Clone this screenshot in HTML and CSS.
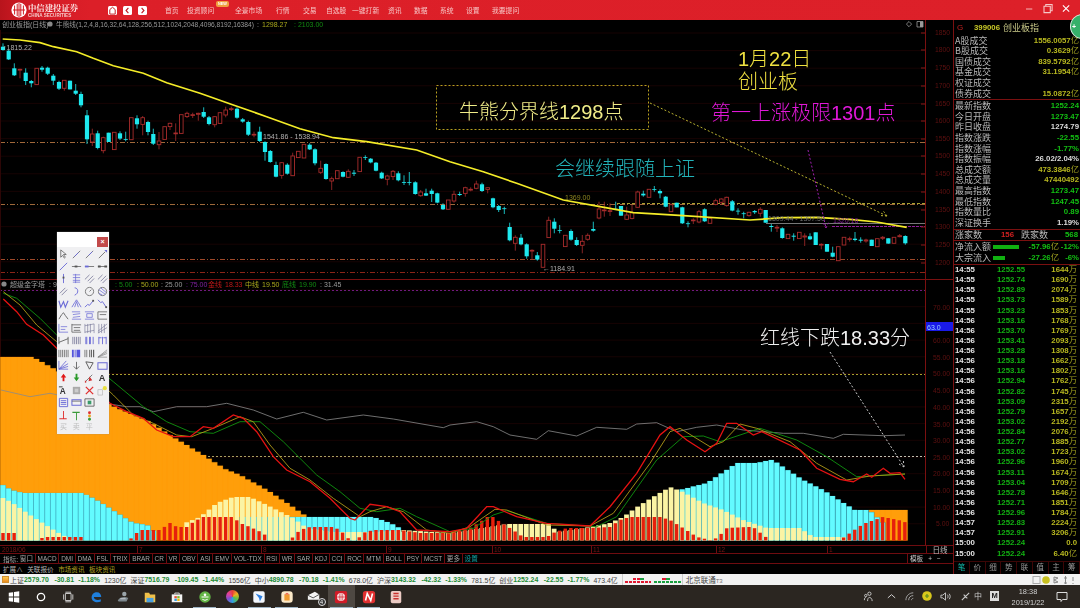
FILE: index.html
```html
<!DOCTYPE html>
<html lang="zh-CN">
<head>
<meta charset="utf-8">
<title>中信建投证券</title>
<link rel="stylesheet" href="styles.css">
</head>
<body>
<div class="app">
  <header class="topbar">
    <div class="brand">
      <svg class="brand-mark" viewBox="0 0 16 16"><circle cx="8" cy="8" r="7.6" fill="#fff"/><path d="M3.6 3.5v9M6.2 1.8v12.4M8 1v14M9.8 1.8v12.4M12.4 3.5v9M2 8h12" stroke="#d01c24" stroke-width="1" fill="none"/></svg>
      <div class="brand-text"><strong>中信建投证券</strong><small>CHINA SECURITIES</small></div>
    </div>
    <div class="navbtns">
      <span class="navbtn"><svg viewBox="0 0 10 10"><path d="M2 9V4l3-2.6L8 4v5z" fill="none" stroke="#c02028" stroke-width="1.1"/></svg></span>
      <span class="navbtn"><svg viewBox="0 0 10 10"><path d="M6 2L3.4 5 6 8" fill="none" stroke="#c02028" stroke-width="1.3"/></svg></span>
      <span class="navbtn"><svg viewBox="0 0 10 10"><path d="M4 2l2.6 3L4 8" fill="none" stroke="#c02028" stroke-width="1.3"/></svg></span>
    </div>
    <nav class="menu">
      <span class="m1">首页</span>
      <span class="m2">投资顾问<em class="newtag">NEW</em></span>
      <span class="m3">全景市场</span>
      <span class="m4">行情</span>
      <span class="m5">交易</span>
      <span class="m6">自选股</span>
      <span class="m7">一键打新</span>
      <span class="m8">资讯</span>
      <span class="m9">数据</span>
      <span class="m9">系统</span>
      <span class="m9">设置</span>
      <span class="m10">我要提问</span>
    </nav>
    <div class="winctl">
      <svg viewBox="0 0 60 20"><path d="M0 10h7" stroke="#f6c8c8" stroke-width="1"/><path d="M20 7h7v7h-7zM22 7V5h7v7h-2" fill="none" stroke="#f6c8c8" stroke-width="1.2"/><path d="M41 6l7 7M48 6l-7 7" stroke="#fff" stroke-width="1.2"/></svg>
    </div>
  </header>

  <div class="body">
    <section class="charts">
      <svg id="chart" class="chart" viewBox="0 20 953 525" width="953" height="525">
        <g id="grid"></g>
        <g id="candles"></g>
        <g id="bars"></g>
        <g id="lines"></g>

        <g class="hdr">
          <text x="2" y="27" class="t-gray">创业板指(日线)</text>
          <circle cx="50" cy="24" r="2.6" fill="#888"/>
          <text x="56" y="27" class="t-gray t-long">牛熊线(1,2,4,8,16,32,64,128,256,512,1024,2048,4096,8192,16384)</text>
          <text x="257" y="27" class="t-gray">:</text>
          <text x="262" y="27" class="t-yellow">1298.27</text>
          <text x="294" y="27" class="t-green">: 2103.00</text>
          <path d="M909 21.5l2.6 2.6-2.6 2.6-2.6-2.6z" fill="none" stroke="#999" stroke-width=".8"/>
          <path d="M917 21.5h6v5.5h-6z" fill="none" stroke="#999" stroke-width=".8"/><path d="M920 21.5h3v5.5h-3z" fill="#999"/>

          <circle cx="4" cy="284" r="2.6" fill="#888"/>
          <text x="10" y="287" class="t-gray">超级金字塔</text>
          <text x="49" y="287" class="t-gray">: 9.00</text>
          <text x="115" y="287" class="t-green">: 5.00</text>
          <text x="137" y="287" class="t-yellow">: 50.00</text>
          <text x="161" y="287" class="t-gray">: 25.00</text>
          <text x="186" y="287" class="t-purple">: 75.00</text>
          <text x="208" y="287" class="t-red">金线</text>
          <text x="225" y="287" class="t-red">18.33</text>
          <text x="245" y="287" class="t-yellow">中线</text>
          <text x="262" y="287" class="t-yellow">19.50</text>
          <text x="282" y="287" class="t-green">底线</text>
          <text x="299" y="287" class="t-green">19.90</text>
          <text x="320" y="287" class="t-gray">: 31.45</text>
        </g>

        <g class="marks">
          <text x="3" y="50" class="t-lt">↑1815.22</text>
          <text x="263" y="139" class="t-lt">1541.86 - 1538.94</text>
          <text x="543" y="271" class="t-lt">←1184.91</text>
          <text x="565" y="200" class="t-ochre">1369.00</text>
          <text x="768" y="221" class="t-dim">1309.44 - 1307.50</text>
          <text x="833" y="223" class="t-violet">1320.16</text>
        </g>

        <g id="axis" class="axis">
          <text x="935" y="35">1850</text><text x="935" y="52">1800</text><text x="935" y="70">1750</text>
          <text x="935" y="88">1700</text><text x="935" y="106">1650</text><text x="935" y="123">1600</text>
          <text x="935" y="141">1550</text><text x="935" y="158">1500</text><text x="935" y="176">1450</text>
          <text x="935" y="194">1400</text><text x="935" y="212">1350</text><text x="935" y="229">1300</text>
          <text x="935" y="247">1250</text><text x="935" y="265">1200</text>
          <text x="933" y="310">70.00</text>
          <text x="933" y="343">60.00</text><text x="933" y="360">55.00</text><text x="933" y="376">50.00</text>
          <text x="933" y="393">45.00</text><text x="933" y="410">40.00</text><text x="933" y="427">35.00</text>
          <text x="933" y="443">30.00</text><text x="933" y="460">25.00</text><text x="933" y="476">20.00</text>
          <text x="933" y="493">15.00</text><text x="933" y="510">10.00</text><text x="936" y="526">5.00</text>
        </g>
        <rect x="926" y="322" width="27" height="9" fill="#1a1ae8"/>
        <text x="927" y="329.5" class="t-tag">63.0</text>

        <g class="notes">
          <rect x="436.5" y="85.5" width="212" height="44" class="notebox"/>
          <text x="459" y="119" class="n n-cream">牛熊分界线1298点</text>
          <text x="738" y="66" class="n n-yellow">1月22日</text>
          <text x="738" y="89" class="n n-yellow">创业板</text>
          <text x="711" y="120" class="n n-magenta">第一上涨极限1301点</text>
          <text x="555" y="176" class="n n-teal">会继续跟随上证</text>
          <text x="760" y="345" class="n n-white">红线下跌18.33分</text>
          <path d="M650 103L887 216M887 216l-6-.4M887 216l-3.4-4.6" class="arrow a-yellow"/>
          <path d="M808 150L826 228M826 228l-3-5M826 228l2.4-5.2" class="arrow a-purple"/>
          <path d="M830 352L904 467M904 467l-5-3M904 467l-.6-6" class="arrow a-white"/>
        </g>
      </svg>

      <div class="daterow">
        <span class="d d0">2018/06</span><span class="d d1">7</span><span class="d d2">8</span><span class="d d3">9</span><span class="d d4">10</span><span class="d d5">11</span><span class="d d6">12</span><span class="d d7">1</span>
        <span class="dateside">日线</span>
      </div>
      <div class="tabrow">
        <span class="tlabel">指标:</span><span class="tab cn">窗口</span><span class="tab">MACD</span><span class="tab">DMI</span><span class="tab">DMA</span><span class="tab">FSL</span><span class="tab">TRIX</span><span class="tab">BRAR</span><span class="tab">CR</span><span class="tab">VR</span><span class="tab">OBV</span><span class="tab">ASI</span><span class="tab">EMV</span><span class="tab">VOL-TDX</span><span class="tab">RSI</span><span class="tab">WR</span><span class="tab">SAR</span><span class="tab">KDJ</span><span class="tab">CCI</span><span class="tab">ROC</span><span class="tab">MTM</span><span class="tab">BOLL</span><span class="tab">PSY</span><span class="tab">MCST</span><span class="tab cn">更多</span><span class="tab cn teal">设置</span>
        <span class="tabside"><span class="cn">模板</span><span>+</span><span>−</span></span>
      </div>
      <div class="extrow">
        <span>扩展∧</span><span>关联报价</span><span class="ochre">市场资讯</span><span class="ochre">板块资讯</span>
      </div>

      <aside class="toolbox">
        <div class="toolhead"><span class="toolx">×</span></div>
        <div id="tools" class="toolgrid"></div>
        <div class="toolfoot"><span>买</span><span>卖</span><span>平</span></div>
      </aside>
    </section>

    <section class="panel">
      <div class="phead"><span class="g">G</span><b>399006</b><span class="pname">创业板指</span></div>
      <div class="sect">
        <div class="row"><span>A股成交</span><b class="y">1556.0057<i>亿</i></b></div>
        <div class="row"><span>B股成交</span><b class="y">0.3629<i>亿</i></b></div>
        <div class="row"><span>国债成交</span><b class="y">839.5792<i>亿</i></b></div>
        <div class="row"><span>基金成交</span><b class="y">31.1954<i>亿</i></b></div>
        <div class="row"><span>权证成交</span><b></b></div>
        <div class="row"><span>债券成交</span><b class="y">15.0872<i>亿</i></b></div>
      </div>
      <div class="sect s2">
        <div class="row"><span>最新指数</span><b class="gr">1252.24</b></div>
        <div class="row"><span>今日开盘</span><b class="gr">1273.47</b></div>
        <div class="row"><span>昨日收盘</span><b class="w">1274.79</b></div>
        <div class="row"><span>指数涨跌</span><b class="gr">-22.55</b></div>
        <div class="row"><span>指数涨幅</span><b class="gr">-1.77%</b></div>
        <div class="row"><span>指数振幅</span><b class="w">26.02/2.04%</b></div>
        <div class="row"><span>总成交额</span><b class="y">473.3846<i>亿</i></b></div>
        <div class="row"><span>总成交量</span><b class="y">47440492</b></div>
        <div class="row"><span>最高指数</span><b class="gr">1273.47</b></div>
        <div class="row"><span>最低指数</span><b class="gr">1247.45</b></div>
        <div class="row"><span>指数量比</span><b class="gr">0.89</b></div>
        <div class="row"><span>深证换手</span><b class="w">1.19%</b></div>
      </div>
      <div class="updown"><span>涨家数</span><b class="rd">156</b><span>跌家数</span><b class="gr">568</b></div>
      <div class="sect s3">
        <div class="flow"><span>净流入额</span><em class="fbar f1"></em><b class="gr">-57.96<i>亿</i></b><b class="gr">-12%</b></div>
        <div class="flow"><span>大宗流入</span><em class="fbar f2"></em><b class="gr">-27.26<i>亿</i></b><b class="gr">-6%</b></div>
      </div>
      <div class="ticks">
        <div class="tk"><b>14:55</b><b>1252.55</b><b>1644<i>万</i></b></div>
        <div class="tk"><b>14:55</b><b>1252.74</b><b>1690<i>万</i></b></div>
        <div class="tk"><b>14:55</b><b>1252.89</b><b>2074<i>万</i></b></div>
        <div class="tk"><b>14:55</b><b>1253.73</b><b>1589<i>万</i></b></div>
        <div class="tk"><b>14:55</b><b>1253.23</b><b>1853<i>万</i></b></div>
        <div class="tk"><b>14:56</b><b>1253.16</b><b>1768<i>万</i></b></div>
        <div class="tk"><b>14:56</b><b>1253.70</b><b>1769<i>万</i></b></div>
        <div class="tk"><b>14:56</b><b>1253.41</b><b>2093<i>万</i></b></div>
        <div class="tk"><b>14:56</b><b>1253.28</b><b>1308<i>万</i></b></div>
        <div class="tk"><b>14:56</b><b>1253.18</b><b>1662<i>万</i></b></div>
        <div class="tk"><b>14:56</b><b>1253.16</b><b>1802<i>万</i></b></div>
        <div class="tk"><b>14:56</b><b>1252.94</b><b>1762<i>万</i></b></div>
        <div class="tk"><b>14:56</b><b>1252.82</b><b>1745<i>万</i></b></div>
        <div class="tk"><b>14:56</b><b>1253.09</b><b>2315<i>万</i></b></div>
        <div class="tk"><b>14:56</b><b>1252.79</b><b>1657<i>万</i></b></div>
        <div class="tk"><b>14:56</b><b>1253.02</b><b>2192<i>万</i></b></div>
        <div class="tk"><b>14:56</b><b>1252.84</b><b>2076<i>万</i></b></div>
        <div class="tk"><b>14:56</b><b>1252.77</b><b>1885<i>万</i></b></div>
        <div class="tk"><b>14:56</b><b>1253.02</b><b>1723<i>万</i></b></div>
        <div class="tk"><b>14:56</b><b>1252.96</b><b>1960<i>万</i></b></div>
        <div class="tk"><b>14:56</b><b>1253.11</b><b>1674<i>万</i></b></div>
        <div class="tk"><b>14:56</b><b>1253.04</b><b>1709<i>万</i></b></div>
        <div class="tk"><b>14:56</b><b>1252.78</b><b>1646<i>万</i></b></div>
        <div class="tk"><b>14:56</b><b>1252.71</b><b>1851<i>万</i></b></div>
        <div class="tk"><b>14:56</b><b>1252.96</b><b>1784<i>万</i></b></div>
        <div class="tk"><b>14:57</b><b>1252.83</b><b>2224<i>万</i></b></div>
        <div class="tk"><b>14:57</b><b>1252.91</b><b>3206<i>万</i></b></div>
        <div class="tk"><b>15:00</b><b>1252.24</b><b>0.0</b></div>
        <div class="tk"><b>15:00</b><b>1252.24</b><b>6.40<i>亿</i></b></div>
      </div>
      <div class="ptabs"><span class="on">笔</span><span>价</span><span>细</span><span>势</span><span>联</span><span>值</span><span>主</span><span>筹</span></div>
    </section>
  </div>

  <footer class="status">
    <span class="sticon"></span>
    <span class="si"><span>上证</span><b>2579.70</b><b>-30.81</b><b>-1.18%</b><u>1230亿</u></span>
    <span class="si"><span>深证</span><b>7516.79</b><b>-109.45</b><b>-1.44%</b><u>1556亿</u></span>
    <span class="si"><span>中小</span><b>4890.78</b><b>-70.18</b><b>-1.41%</b><u>678.0亿</u></span>
    <span class="si"><span>沪深</span><b>3143.32</b><b>-42.32</b><b>-1.33%</b><u>781.5亿</u></span>
    <span class="si"><span>创业</span><b>1252.24</b><b>-22.55</b><b>-1.77%</b><u>473.4亿</u></span>
    <span class="blocks">
      <svg viewBox="0 0 56 9" width="56" height="9"><path d="M0 6h3v2H0zM4 6h3v2H4zM8 6h3v2H8zM12 6h3v2h-3zM16 6h3v2h-3zM20 6h3v2h-3zM8 3h3v2H8zM12 3h3v2h-3zM24 6h2v2h-2z" fill="#e01830"/><path d="M15 3h4v2h-4z" fill="#19a040"/>
      <path d="M29 6h3v2h-3zM33 6h3v2h-3zM37 6h3v2h-3zM41 6h3v2h-3zM45 6h3v2h-3zM49 6h3v2h-3zM53 6h3v2h-3z" fill="#19a040"/><path d="M37 3h4v2h-4z" fill="#e01830"/><path d="M41 3h4v2h-4z" fill="#19a040"/></svg>
    </span>
    <span class="net">北京联通<small>T3</small></span>
    <span class="tray-mini">
      <svg viewBox="0 0 44 10" width="44" height="10"><rect x="1" y="1.500" width="7" height="7" fill="none" stroke="#aaa"/><circle cx="14" cy="5" r="3.800" fill="#c8c020"/><path d="M22 2l4 1-4 2 4 2-4 1zM32 3h3M33.500 1v8M32 8h3M41 2v4M41 8v1" stroke="#888" fill="none"/></svg>
    </span>
  </footer>

  <div class="taskbar">
    <div class="slots">
      <span class="slot"><svg viewBox="0 0 16 16"><path d="M2 3.200l5-.7v5H2zM8 2.400l6-.9V7.500H8zM2 8.500h5v5l-5-.7zM8 8.500h6v6l-6-.9z" fill="#fff"/></svg></span>
      <span class="slot"><svg viewBox="0 0 16 16"><circle cx="8" cy="8" r="4.200" fill="none" stroke="#fff" stroke-width="1.500"/></svg></span>
      <span class="slot"><svg viewBox="0 0 16 16"><path d="M5 4h6.500v8H5zM3 5v6M13.500 5v6M5 2.500h6.500M5 13.500h6.500" fill="none" stroke="#ddd" stroke-width="1"/></svg></span>
      <span class="slot"><svg viewBox="0 0 16 16"><path d="M3 8.500C3 4.500 6 2.500 9 2.500c3.200 0 5 2.400 5 5.500H5.500c.2 3 4.500 4.500 8 2.500v2.500c-4 2-10.500.8-10.500-4.500z" fill="#1f7fdc"/></svg></span>
      <span class="slot"><svg viewBox="0 0 16 16"><circle cx="9.500" cy="4.500" r="2.500" fill="#9aa3a8"/><path d="M2 12c2-4 8-5 12-3l-2 4H3z" fill="#7d878d"/><path d="M5 10h6" stroke="#d0d4d8"/></svg></span>
      <span class="slot"><svg viewBox="0 0 16 16"><path d="M2 3h5l1 2h6v9H2z" fill="#f0c04a"/><path d="M4 9h8v5H4z" fill="#4aa0e0"/></svg></span>
      <span class="slot"><svg viewBox="0 0 16 16"><path d="M2 5h12v9H2z" fill="#f4f4f4"/><path d="M5.500 5V3.500h5V5" fill="none" stroke="#eee"/><path d="M5 7h2.800v2.500H5z" fill="#e8503a"/><path d="M8.300 7H11v2.500H8.300z" fill="#7cbb2c"/><path d="M5 10h2.800v2.500H5z" fill="#2a9ce0"/><path d="M8.300 10H11v2.500H8.300z" fill="#f4b400"/></svg></span>
      <span class="slot line"><svg viewBox="0 0 16 16"><circle cx="8" cy="8" r="6.500" fill="#62b545"/><path d="M4 8h8M5 10.500c2 1.500 4 1.500 6 0" stroke="#fff" fill="none" stroke-width="1.200"/><circle cx="8" cy="5.500" r="1.500" fill="#fff"/></svg></span>
      <span class="slot"><i class="conic"></i></span>
      <span class="slot line"><svg viewBox="0 0 16 16"><rect x="1.500" y="1.500" width="13" height="13" rx="2" fill="#f2f6fc"/><path d="M4 4l8 3-3 6-1-4z" fill="#2d7fe0"/></svg></span>
      <span class="slot line"><svg viewBox="0 0 16 16"><rect x="1.500" y="1.500" width="13" height="13" rx="3.500" fill="#fbe9c8"/><path d="M5 5h6v7H5z" fill="#f09a30"/><path d="M5 5l3-2 3 2" fill="#e85a4a"/></svg></span>
      <span class="slot badged"><svg viewBox="0 0 16 16"><path d="M1 6l8-4 5 3v6H1z" fill="#f4f4f4"/><path d="M1 6l6 3 7-4" fill="none" stroke="#444"/></svg><em class="badge">4</em></span>
      <span class="slot active"><svg viewBox="0 0 16 16"><rect x="1" y="1" width="14" height="14" rx="2" fill="#d01c28"/><circle cx="8" cy="8" r="4.500" fill="#fff"/><path d="M6 4v8M8 3.500v9M10 4v8M3.500 8h9" stroke="#d01c28" stroke-width=".8"/></svg></span>
      <span class="slot line"><svg viewBox="0 0 16 16"><rect x="1" y="1" width="14" height="14" rx="3" fill="#e03030"/><path d="M4 12L6 4l4 8 2-8" fill="none" stroke="#fff" stroke-width="1.800"/></svg></span>
      <span class="slot"><svg viewBox="0 0 16 16"><rect x="2" y="1" width="12" height="14" rx="2" fill="#eccbc4"/><path d="M5 4h6M5 7h6M5 10h6" stroke="#c9302c" stroke-width="1.500"/></svg></span>
    </div>
    <div class="tray">
      <svg class="ti t1" viewBox="0 0 12 12"><circle cx="7" cy="3" r="1.800" fill="none" stroke="#ccc"/><circle cx="3" cy="5" r="1.300" fill="none" stroke="#ccc"/><path d="M5 11c0-3 1-4 2-4s3 1 3 4M1.500 10c0-2 .6-3 1.500-3" fill="none" stroke="#ccc"/></svg>
      <svg class="ti t2" viewBox="0 0 12 12"><path d="M2 7.500l4-3.500 4 3.500" fill="none" stroke="#ddd"/></svg>
      <svg class="ti t3" viewBox="0 0 12 12"><path d="M1 10c0-5 4-8 8-8M4 10c0-3 2-5 5-5M7 10c0-1 1-2 2-2" fill="none" stroke="#aaa"/></svg>
      <svg class="ti t4" viewBox="0 0 12 12"><circle cx="6" cy="6" r="4.800" fill="#d8c81c"/><path d="M4 6h4M6 4v4" stroke="#5a8a20" stroke-width="1.200"/></svg>
      <svg class="ti t5" viewBox="0 0 12 12"><path d="M1 4.500h2L6 2v8L3 7.500H1z" fill="none" stroke="#ccc"/><path d="M8 4c1 1 1 3 0 4M10 3c1.500 2 1.500 4 0 6" fill="none" stroke="#ccc"/></svg>
      <svg class="ti t6" viewBox="0 0 12 12"><path d="M2 10l3-3M5 7l2-2M7 5l3-3M4 4l4 4" fill="none" stroke="#ccc" stroke-width="1.200"/></svg>
      <span class="ime">中</span>
      <span class="msk">M</span>
      <span class="clock"><span>18:38</span><span>2019/1/22</span></span>
      <svg class="ti t7" viewBox="0 0 12 12"><path d="M1 1.500h10v7H6.500L5 10.500V8.500H1z" fill="none" stroke="#ddd"/></svg>
    </div>
  </div>

  <span class="floatball">+</span>
</div>
<script src="chart.js"></script>
</body>
</html>
```

FILE: styles.css
```css
* { box-sizing: border-box; }
html, body { margin: 0; padding: 0; width: 1080px; height: 608px; overflow: hidden; background: #000; }
body { font-family: "Liberation Sans", "Noto Sans CJK SC", sans-serif; }
i, em, u { font-style: normal; text-decoration: none; }
.app { position: relative; width: 1080px; height: 608px; display: flex; flex-direction: column; overflow: hidden; filter: blur(.3px); }

/* top bar */
.topbar { height: 20px; flex: none; display: flex; align-items: center; background: linear-gradient(90deg, #b8141c 0, #d01a24 25px, #dc1f28 90px, #dd2029 100%); color: #fff; position: relative; }
.brand { display: flex; align-items: center; width: 108px; padding-left: 11px; gap: 1px; }
.brand-mark { width: 16px; height: 16px; flex: none; }
.brand-text { display: flex; flex-direction: column; line-height: 1; }
.brand-text strong { font: bold 8.4px "Noto Serif CJK SC", "Noto Sans CJK SC", serif; color: #fbe6e6; letter-spacing: 0; white-space: nowrap; }
.brand-text small { font-size: 4.600px; font-weight: bold; color: #f4c8c8; margin-top: 1.500px; white-space: nowrap; }
.navbtns { display: flex; gap: 6px; width: 57px; }
.navbtn { width: 9px; height: 9px; background: #fff; border-radius: 1.500px; display: block; }
.navbtn svg { display: block; width: 9px; height: 9px; }
.menu { display: flex; font: 6.800px "Noto Sans CJK SC", sans-serif; color: #f6c4c4; white-space: nowrap; }
.menu span { display: block; position: relative; }
.m1 { width: 22px; }
.m2 { width: 48px; }
.m3 { width: 41px; }
.m4 { width: 27px; }
.m5 { width: 23px; }
.m6 { width: 26px; }
.m7 { width: 36px; }
.m8 { width: 26px; }
.m9 { width: 26px; }
.m10 { width: 30px; }
.newtag { position: absolute; left: 29px; top: -4px; background: #f0a040; color: #fff; font: bold 3.800px "Liberation Sans", sans-serif; padding: 0 2px; line-height: 6px; border-radius: 2px; }
.winctl { position: absolute; left: 1026px; top: 0; width: 54px; height: 20px; }
.winctl svg { display: block; width: 54px; height: 18px; }
.floatball { position: absolute; left: 1070px; top: 14px; width: 24px; height: 25px; border-radius: 50%; background: #35b06a; border: 1px solid #d8efe0; color: #fff; font: bold 7px "Liberation Sans", sans-serif; line-height: 23px; padding-left: 1px; }

/* layout */
.body { flex: none; height: 554px; display: flex; }
.charts { width: 953px; flex: none; position: relative; display: flex; flex-direction: column; }
.chart { display: block; flex: none; background: #000; }
.daterow { height: 9px; flex: none; position: relative; border-top: 1px solid #6e0c10; border-bottom: 1px solid #6e0c10; }
.d { position: absolute; top: 0; font-size: 6.500px; line-height: 7px; color: #7a1414; border-left: 1px solid #6e0c10; padding-left: 1px; height: 7px; }
.d0 { left: 1px; border-left: 0; }
.d1 { left: 137px; }
.d2 { left: 261px; }
.d3 { left: 386px; }
.d4 { left: 492px; }
.d5 { left: 591px; }
.d6 { left: 716px; }
.d7 { left: 827px; }
.dateside { position: absolute; left: 926px; width: 27px; top: 0; height: 7px; font: 7.500px/7px "Noto Sans CJK SC", sans-serif; color: #bbb; text-align: center; border-left: 1px solid #6e0c10; }
.tabrow { height: 10px; flex: none; display: flex; align-items: center; font-size: 6.450px; color: #a8a8a8; white-space: nowrap; border-bottom: 1px solid #6e0c10; position: relative; }
.tlabel { font: 6.600px "Noto Sans CJK SC", sans-serif; width: 18px; padding-left: 3px; }
.tab { display: block; line-height: 9px; padding: 0 1.800px; border-right: 1px solid #6e0c10; }
.cn { font-family: "Noto Sans CJK SC", sans-serif; font-size: 6.600px; }
.teal { color: #12a8a8; border-right: 0; }
.tabside { position: absolute; left: 907px; top: 0; width: 46px; height: 9px; border-left: 1px solid #6e0c10; display: flex; gap: 5px; line-height: 9px; padding-left: 2px; color: #ccc; }
.extrow { height: 10px; flex: none; display: flex; gap: 4.500px; padding-left: 3px; font: 6.600px/10px "Noto Sans CJK SC", sans-serif; color: #b4b4b4; background: #000; }
.ochre { color: #b0a020; }
.chart text { font-family: "Liberation Sans", "Noto Sans CJK SC", sans-serif; font-size: 7px; }
.chart .t-long { font-size: 6.650px; }
.t-gray { fill: #9a9a9a; }
.t-yellow { fill: #a8a81c; }
.t-green { fill: #128a12; }
.t-purple { fill: #8020a0; }
.t-red { fill: #c01818; }
.t-lt { fill: #b0b0b0; }
.t-dim { fill: #707070; }
.t-ochre { fill: #8c8420; }
.t-violet { fill: #7c1c90; }
.axis text { fill: #5e1010; font-size: 6.800px; }
.chart .t-tag { fill: #9ad0ff; font-size: 7px; }
.chart .n { font-family: "Liberation Sans", "Noto Sans CJK SC", sans-serif; font-size: 20px; font-weight: 300; }
.n-cream { fill: #f0ec88; }
.n-yellow { fill: #f0e040; }
.n-magenta { fill: #e018d8; }
.n-teal { fill: #22b2b8; }
.n-white { fill: #f0f0f0; }
.notebox { fill: none; stroke: #b8a020; stroke-width: 1; stroke-dasharray: 2 2; }
.arrow { fill: none; stroke-width: 1; stroke-dasharray: 2 2; }
.a-yellow { stroke: #b8b030; }
.a-purple { stroke: #a020b0; }
.a-white { stroke: #c8c8c8; }

/* toolbox */
.toolbox { position: absolute; left: 57px; top: 212px; width: 52px; height: 202px; background: #f0f0f2; box-shadow: 0 0 1px #888; }
.toolhead { height: 15px; background: #fff; position: relative; }
.toolx { position: absolute; right: 1px; top: 5px; width: 11px; height: 10px; background: #c24a4a; color: #fff; font: bold 7px/10px "Liberation Sans", sans-serif; text-align: center; }
.toolgrid { display: grid; grid-template-columns: repeat(4, 12.900px); grid-auto-rows: 12.400px; padding-left: 0; padding-top: 1px; }
.toolgrid svg { display: block; width: 11px; height: 11px; margin: .5px auto 0; }
.toolfoot { display: grid; grid-template-columns: repeat(3, 12.900px); font: 7px/11px "Noto Sans CJK SC", sans-serif; color: #bdbdbd; text-align: center; }

/* right panel */
.panel { flex: none; width: 127px; height: 554px; border-left: 1px solid #7a1010; display: flex; flex-direction: column; font: 9px/10.600px "Noto Sans CJK SC", sans-serif; color: #b8b8b8; }
.panel span { display: block; white-space: nowrap; }
.panel b { display: block; font: bold 7.800px/10.600px "Liberation Sans", sans-serif; white-space: nowrap; }
.panel b i { font: 8.300px/0 "Noto Sans CJK SC", sans-serif; color: #a0a020; }
.phead { height: 15.700px; display: flex; align-items: center; padding-left: 3px; flex: none; }
.phead .g { color: #c02020; width: 17px; font: 8px "Liberation Sans", sans-serif; }
.phead b { color: #c8c828; width: 29px; }
.pname { color: #c8c888; font-size: 9px; }
.sect { flex: none; }
.s2 { border-top: 1px solid #7a1010; padding-top: 1px; height: 129.800px; }
.row { display: flex; justify-content: space-between; height: 10.600px; padding: 0 1px 0 1px; }
.row span, .row b { height: 10.600px; }
.y { color: #b8b820; }
.gr { color: #12c012; }
.w { color: #dcdcdc; }
.rd { color: #d02020; }
.updown { flex: none; height: 12px; border-top: 1px solid #7a1010; border-bottom: 1px solid #7a1010; display: grid; grid-template-columns: 42px 17px 45px 1fr; padding-left: 1px; line-height: 10px; }
.panel .updown b { line-height: 10px; }
.updown b:nth-child(2) { text-align: right; }
.updown b:last-child { text-align: right; padding-right: 2px; }
.updown span:nth-child(3) { padding-left: 7px; }
.s3 { height: 24px; border-bottom: 1px solid #7a1010; padding-top: 1px; }
.flow { display: grid; grid-template-columns: 38px 31px 35px 1fr; height: 10.600px; align-items: center; padding-left: 1px; }
.flow b:last-child { text-align: right; padding-right: 1px; }
.flow b:nth-child(3) { text-align: right; }
.fbar { display: block; height: 4px; background: #10b010; }
.f1 { width: 26px; }
.f2 { width: 12px; }
.ticks { flex: none; height: 296px; }
.tk { display: grid; grid-template-columns: 42px 47px 1fr; height: 10.130px; padding-left: 1px; }
.panel .tk b { line-height: 10.130px; height: 10.130px; }
.tk b:nth-child(1) { color: #e4e4e4; }
.tk b:nth-child(2) { color: #12b012; }
.tk b:nth-child(3) { color: #b8b820; text-align: right; padding-right: 3px; }
.ptabs { flex: 1; display: grid; grid-template-columns: repeat(8, 1fr); border-top: 1px solid #3c0606; font: 7.500px/10px "Noto Sans CJK SC", sans-serif; color: #9a9a9a; text-align: center; }
.panel .ptabs span { border-right: 1px solid #3c0606; }
.ptabs .on { color: #10b8a8; }

/* status bar */
.status { flex: none; height: 11px; background: #f2f2f2; display: flex; align-items: center; font-size: 6.900px; color: #333; white-space: nowrap; padding-left: 2px; position: relative; }
.sticon { width: 7px; height: 7px; background: linear-gradient(#fbc850, #ea8a20); border: 1px solid #d09030; margin-right: 1px; flex: none; }
.si { display: flex; align-items: center; margin-right: 4px; }
.si span { font: 7px "Noto Sans CJK SC", sans-serif; color: #444; }
.si b { color: #1c8a34; margin-right: 4.200px; }
.si b:first-of-type { margin-right: 5.500px; }
.si u { color: #444; }
.blocks { display: block; border-left: 1px solid #ccc; border-right: 1px solid #ccc; height: 11px; padding: 1px 0 0 2px; width: 61px; flex: none; }
.blocks svg { display: block; }
.net { font: 7.500px "Noto Sans CJK SC", sans-serif; color: #444; padding-left: 3px; }
.net small { font: 6px "Liberation Sans", sans-serif; color: #777; }
.tray-mini { position: absolute; left: 1032px; top: 0; }
.tray-mini svg { display: block; margin-top: .5px; }

/* taskbar */
.taskbar { flex: none; height: 23px; background: #2b2621; display: flex; justify-content: space-between; }
.slots { display: flex; }
.slot { position: relative; width: 27.300px; height: 23px; display: flex; align-items: center; justify-content: center; }
.slot svg { width: 14px; height: 14px; display: block; }
.slot.line::after, .slot.active::after { content: ""; position: absolute; left: 2px; right: 2px; bottom: 0; height: 1px; background: #9fb4c4; }
.slot.active { background: #4e4842; }
.conic { display: block; width: 13px; height: 13px; border-radius: 50%; background: conic-gradient(#e8403a, #f0b020, #60c040, #30a0e0, #8050d0, #e040a0, #e8403a); }
.badge { position: absolute; right: 2px; bottom: 2px; width: 8px; height: 8px; border-radius: 50%; background: #333; border: 1px solid #ddd; color: #fff; font: 5.500px/6px "Liberation Sans", sans-serif; text-align: center; }
.tray { position: relative; width: 220px; color: #ddd; }
.ti { position: absolute; top: 6px; width: 11px; height: 11px; display: block; }
.t1 { left: 3px; }
.t2 { left: 26px; }
.t3 { left: 45px; }
.t4 { left: 61px; top: 5px; width: 12px; height: 12px; }
.t5 { left: 80px; }
.t6 { left: 100px; }
.t7 { left: 196px; width: 12px; height: 12px; }
.ime { position: absolute; left: 114px; top: 6px; font: 8px/10px "Noto Sans CJK SC", sans-serif; color: #ccc; }
.msk { position: absolute; left: 130px; top: 6px; width: 9px; height: 10px; background: #dcdcdc; color: #222; font: bold 7.500px/10px "Liberation Sans", sans-serif; text-align: center; }
.clock { position: absolute; left: 148px; top: 1px; width: 40px; display: flex; flex-direction: column; align-items: center; font-size: 7.400px; line-height: 11px; color: #cfcfcf; white-space: nowrap; }
```

FILE: chart.js
```js
(function () {
  var c8 = function (p) { return [p[0] / 3, 30 + p[1] / 3]; };
  var c9 = function (p) { return [450 + p[0] / 3, 150 + p[1] / 3]; };
  var c10 = function (p) { return [p[0] / 3, 275 + p[1] / 3]; };
  var c11 = function (p) { return [450 + p[0] / 3, 400 + p[1] / 3]; };
  function pts(list) { return list.map(function (p) { return p[0].toFixed(1) + ',' + p[1].toFixed(1); }).join(' '); }
  function el(id) { return document.getElementById(id); }

  /* grid */
  var g = '';
  for (var y = 33; y < 275; y += 17.6) g += '<path d="M0 ' + y + 'H925" stroke="#170303"/>';
  for (y = 290; y < 540; y += 16.7) g += '<path d="M0 ' + y + 'H925" stroke="#170303"/>';
  function dash(y, x1, x2, col, da) { g += '<path d="M' + x1 + ' ' + y + 'H' + x2 + '" stroke="' + col + '" stroke-dasharray="' + da + '"/>'; }
  dash(142.5, 0, 925, '#a0683a', '5 2 1 2');
  dash(204.5, 0, 925, '#a0683a', '5 2 1 2');
  dash(203.5, 617, 925, '#a8a030', '3 2');
  dash(259.5, 0, 925, '#a04a2a', '5 2 1 2');
  dash(272.5, 0, 925, '#8a2418', '5 2 1 2');
  dash(223.5, 766, 925, '#777', '20 0');
  dash(226.5, 832, 925, '#90209c', '3 1');
  dash(290.5, 0, 925, '#701a80', '2 2');
  dash(374.5, 0, 925, '#a8a030', '2 2');
  dash(456.5, 0, 700, '#a8a060', '2 2');
  dash(456.5, 700, 925, '#c0c0b0', '2 2');
  g += '<path d="M0 279.500H953" stroke="#7a1010"/><path d="M925.500 20V545" stroke="#7a1010"/>';
  g += '<path d="M0.500 30V279M0.500 280V541" stroke="#2c0606"/>';
  [33, 50, 68, 86, 104, 121, 139, 156, 174, 192, 210, 227, 245, 263].forEach(function (y) { g += '<path d="M921 ' + y + 'h4" stroke="#8a1818"/>'; });
  el('grid').innerHTML = g;

  /* candles: [kind, x, bodyTop, bodyBottom, wickHi, wickLo] in crop coordinates */
  var a = [
    ['c',9,50,60,40,62],['c',26,62,88,60,90],['c',43,115,136,100,138],['r',60,118,120,116,145],['c',77,128,153,115,165],['c',94,153,160,150,172],['r',110,115,164],['c',126,113,119,108,125],['c',143,113,131,110,135],['c',160,137,152,132,165],['c',177,156,176,152,180],['r',193,151,175,150,182],['c',210,152,178],['c',227,182,191,162,195],['c',243,192,226,185,232],['c',261,256,328,240,342],['r',277,312,336,296,348],['c',293,310,354,302,358],['r',310,323,362,320,370],['c',326,308,336],['r',343,307,359],['c',360,310,326,304,330],['c',377,327,329,305,334],['r',394,263,329],['c',411,265,283,256,296],['r',428,263,283,258,316],['c',444,276,306,272,316],['c',460,312,341,296,345],['r',477,333,344,306,358],['r',494,290,328],['r',510,280,290,278,300],['r',527,309,311,280,333],['r',544,254,310],['r',561,250,260,245,264],['r',578,254,256,248,264],['r',595,250,253,248,272],['c',611,246,260,232,264],['c',627,262,282,258,286],['r',644,260,284,258,292],['r',660,248,280],['r',677,240,255,230,262],['r',694,236,238,230,243],['c',711,236,263,232,266],['c',728,268,275,264,278],['c',745,276,314,272,318],['r',762,313,315,305,322],['c',779,305,333,290,336],['c',795,336,366,334,392],['c',811,363,396,360,398],['c',828,405,440,395,442],['r',845,398,436,396,446],['c',862,404,431,400,434],['r',878,378,437,368,438],['r',895,364,383],['r',912,343,384],['c',929,344,358,340,360],['c',945,358,400,355,406],['r',962,415,427,392,432],['c',978,402,447,400,449],['r',995,446,453,440,480],['r',1012,422,446],['c',1029,426,440,424,442],['r',1045,424,442,418,444],['c',1062,428,431,420,438],['r',1079,382,425],['c',1096,381,383,376,390],['c',1112,386,397,384,400],['c',1128,398,422,396,424],['c',1145,428,445,425,447],['r',1162,438,448,434,466],['r',1179,424,440,420,450],['c',1195,430,451,424,454],['c',1212,456,458,436,465],['c',1228,456,458,426,466],['c',1246,457,492,454,494],['r',1262,486,497,480,500],['c',1278,490,497,476,498],['c',1295,482,492,476,516],['c',1312,490,518,488,520],['c',1329,525,538,520,540],['r',1345,510,538]
  ];
  var b = [
    ['r',12,133,153,122,158],['c',29,132,135,125,138],['r',46,113,130,110,140],['r',62,118,120,112,124],['r',79,102,115,92,118],['c',96,103,123,98,126],['r',113,113,118,112,130],['c',129,145,172,143,175],['c',146,168,180,165,186],['c',163,175,177,170,192],['c',179,231,271,218,274],['r',196,262,280,256,302],['c',213,263,283,252,286],['c',230,283,319,280,326],['r',246,301,303,298,330],['c',262,316,329,306,332],['r',279,283,352],['r',296,211,263,200,264],['c',313,215,236,205,250],['c',329,240,242,225,250],['r',346,256,290],['c',363,243,269,238,272],['c',380,270,285,262,288],['r',397,274,286,255,310],['r',413,256,268,250,272],['c',430,237,242,215,245],['r',447,177,204,155,208],['r',463,180,182,155,200],['r',480,182,184,160,198],['c',497,176,178,155,180],['c',513,168,197],['r',530,195,208,170,210],['r',546,188,205,165,208],['r',563,126,172,122,174],['c',580,131,136,122,140],['r',597,118,142],['c',613,117,119,108,125],['c',630,123,130,118,145],['c',647,140,170,138,172],['r',663,164,185,160,186],['c',680,158,172],['c',697,172,220,170,222],['c',714,220,222,214,232],['r',730,210,212,205,222],['r',747,185,216,180,220],['c',764,178,214,175,216],['r',780,205,220],['r',797,152,163,146,166],['r',814,147,157,145,165],['r',830,142,167,140,170],['c',847,154,182,150,184],['c',864,182,184,175,194],['c',881,190,192,185,205],['r',897,187,197,185,200],['c',914,183,187,180,192],['r',931,178,190,172,200],['c',947,180,218],['c',964,228,231,222,245],['r',981,232,234,225,246],['c',997,235,264,232,266],['r',1014,253,266],['c',1031,257,260,250,272],['r',1048,247,266],['r',1064,258,261,250,288],['c',1080,259,268,250,270],['c',1097,247,285],['r',1114,283,285,280,298],['c',1131,282,305],['c',1148,308,320,290,322],['r',1165,290,332],['r',1182,262,285],['r',1199,266,268,260,275],['c',1215,266,270,246,274],['c',1232,269,272,262,278],['r',1248,270,273,266,278],['c',1265,269,288],['r',1282,266,290],['r',1298,262,265,258,270],['c',1315,265,281],['r',1332,262,280],['r',1349,257,260,252,262],['c',1366,258,280,256,284]
  ];
  function candle(d, conv) {
    var top = conv([d[1], d[2]]), bot = conv([d[1], d[3]]);
    var hi = d[4] != null ? conv([d[1], d[4]])[1] : top[1];
    var lo = d[5] != null ? conv([d[1], d[5]])[1] : bot[1];
    var x = top[0], red = d[0] === 'r', col = red ? '#a82c2c' : '#1ee8ee';
    var s = '<path d="M' + x.toFixed(1) + ' ' + hi.toFixed(1) + 'V' + lo.toFixed(1) + '" stroke="' + col + '" stroke-width=".8"/>';
    var h = Math.max(bot[1] - top[1], .8);
    if (red) s += '<rect x="' + (x - 1.8).toFixed(1) + '" y="' + top[1].toFixed(1) + '" width="3.6" height="' + h.toFixed(1) + '" fill="#000" stroke="' + col + '" stroke-width=".9"/>';
    else s += '<rect x="' + (x - 2.1).toFixed(1) + '" y="' + top[1].toFixed(1) + '" width="4.2" height="' + h.toFixed(1) + '" fill="' + col + '"/>';
    return s;
  }
  var cs = '';
  a.forEach(function (d) { cs += candle(d, c8); });
  b.forEach(function (d) { cs += candle(d, c9); });
  var ma = [[8,27],[60,30],[120,38],[160,50],[230,65],[280,85],[340,107],[430,130],[500,158],[600,190],[700,225],[800,260],[900,296],[1000,323],[1100,335],[1250,360],[1350,395]].map(c8)
    .concat([[100,65],[200,100],[340,150],[450,170],[550,188],[700,197],[900,210],[1000,203],[1100,202],[1200,208],[1280,216],[1370,232]].map(c9));
  cs += '<polyline points="' + pts(ma) + '" fill="none" stroke="#f4ec28" stroke-width="1.700"/>';
  el('candles').innerHTML = cs;

  /* stacked bars */
  function interp(list, x) {
    if (x < list[0][0] || x > list[list.length - 1][0]) return null;
    for (var i = 1; i < list.length; i++) {
      if (x <= list[i][0]) {
        var t = (x - list[i - 1][0]) / ((list[i][0] - list[i - 1][0]) || 1);
        return list[i - 1][1] + (list[i][1] - list[i - 1][1]) * t;
      }
    }
    return null;
  }
  var BOT = 540.5, STEP = 5.567;
  var orange = [[1,357],[33,357],[47,365],[80,383],[110,405],[150,422],[173,437],[200,453],[227,470],[240,475],[267,490],[290,505],[307,517],[312,540.5]];
  var orange2 = [[869,510],[908,510]];
  var cyan = [[1,484],[11,490],[23,493],[83,493],[100,502],[117,513],[133,523],[147,525],[153,530],[157,540]];
  var cyan2 = [[240,517],[293,517],[373,517],[390,523],[403,530],[407,540]];
  var cyan3 = [[680,490],[707,483],[737,463],[757,463],[770,460],[773,460],[783,467],[803,480],[823,490],[850,507],[855,510],[869,510],[883,523],[887,540]];
  var yel = [[1,497],[11,502],[33,517],[57,532],[72,540]];
  var yel2 = [[185,523],[200,517],[217,503],[233,497],[250,497],[267,505],[283,513],[293,518],[307,528],[333,532],[373,532],[403,530],[450,533],[507,524],[550,524],[557,532],[590,527],[610,523],[623,517],[637,507],[653,497],[670,487],[683,492],[703,503],[723,510],[743,520],[767,528],[800,528],[813,537],[843,537],[850,540]];
  var red = [[1,533],[15,533],[18,540],[40,540],[43,537],[83,537],[85,540],[130,540],[132,537],[140,530],[160,530],[170,523],[177,527],[187,527],[192,523],[197,520],[203,517],[233,517],[240,523],[250,527],[263,533],[267,537],[270,540],[290,540],[293,537],[300,530],[310,527],[333,527],[340,530],[350,540],[357,540],[363,533],[373,530],[400,530],[420,533],[450,533],[470,528],[480,522],[487,517],[493,517],[500,522],[513,530],[523,537],[547,537],[553,533],[567,528],[590,528],[610,527],[620,520],[630,517],[660,517],[670,520],[683,528],[697,537],[710,540],[717,538],[727,528],[747,527],[753,527],[763,535],[770,540],[840,540],[850,533],[863,524],[883,517],[903,521],[908,524]];
  var bs = '';
  function solid(list, fill) {
    var d = '';
    for (var i = 0; i < 164; i++) {
      var x = 3 + STEP * i, v = interp(list, x);
      if (v === null || v >= BOT - .5) continue;
      d += 'M' + (x - STEP / 2).toFixed(2) + ' ' + BOT + 'V' + v.toFixed(1) + 'H' + (x + STEP / 2).toFixed(2) + 'V' + BOT + 'z';
    }
    bs += '<path d="' + d + '" fill="' + fill + '" stroke="' + fill + '" stroke-width=".2"/>';
  }
  function layer(list, fill, w) {
    for (var i = 0; i < 164; i++) {
      var x = 3 + STEP * i, v = interp(list, x);
      if (v === null || v >= BOT - .5) continue;
      bs += '<rect x="' + (x - w / 2).toFixed(2) + '" y="' + v.toFixed(1) + '" width="' + w + '" height="' + (BOT - v).toFixed(1) + '" fill="' + fill + '"/>';
    }
  }
  solid(orange, '#ff9e0a');
  solid(orange2, '#ff9e0a');
  solid(cyan, '#3fa8bc'); solid(cyan2, '#3fa8bc'); solid(cyan3, '#2f8ea0');
  layer(cyan, '#63fbff', 4.8); layer(cyan2, '#63fbff', 4.8); layer(cyan3, '#63fbff', 4.8);
  layer(yel, '#fbf4a4', 4.8); layer(yel2, '#fbf4a4', 4.8);
  layer(red, '#e6200c', 3.4);
  el('bars').innerHTML = bs;

  /* oscillator lines */
  function line(list, col, w) { return '<polyline points="' + pts(list) + '" fill="none" stroke="' + col + '" stroke-width="' + w + '"/>'; }
  var grayL = [[3,345],[90,365],[150,355],[250,375],[380,395],[420,395],[460,410],[530,395],[620,395],[680,385],[760,405],[830,432],[910,412],[980,435],[1090,420],[1180,432],[1330,458],[1350,450]].map(c10)
    .concat([[80,65],[130,80],[180,105],[260,118],[295,92],[380,108],[440,82],[530,88],[560,72],[620,68],[680,95],[740,82],[800,75],[880,90],[1000,100],[1060,100],[1150,115],[1180,103],[1300,107],[1365,105]].map(c11));
  var greenL = [[10,55],[50,70],[120,130],[180,190],[340,320],[430,395],[500,440],[570,470],[640,475],[720,440],[780,440],[850,500],[950,600],[1020,650],[1080,700],[1130,710],[1200,700],[1250,725],[1350,770]].map(c10)
    .concat([[70,385],[130,345],[170,332],[290,370],[440,380],[500,350],[620,180],[700,110],[760,108],[810,125],[930,85],[1040,120],[1130,170],[1220,230],[1365,222]].map(c11));
  var yelL = [[10,50],[60,90],[110,150],[170,200],[340,360],[400,420],[460,445],[530,480],[575,485],[640,460],[720,425],[760,440],[810,510],[870,580],[930,615],[1000,670],[1080,725],[1110,710],[1160,695],[1210,710],[1280,765],[1350,775]].map(c10)
    .concat([[60,380],[135,328],[170,330],[290,375],[420,378],[490,340],[600,190],[660,95],[690,85],[780,140],[820,125],[870,72],[920,85],[1020,125],[1100,190],[1190,240],[1260,228],[1365,222]].map(c11));
  var redL = [[10,72],[50,110],[80,148],[130,180],[170,220],[330,385],[380,410],[430,430],[470,465],[520,485],[570,485],[610,455],[640,460],[700,420],[730,430],[770,470],[820,545],[860,585],[930,620],[990,670],[1050,730],[1065,735],[1110,688],[1160,695],[1200,710],[1250,765],[1350,770]].map(c10)
    .concat([[50,385],[110,320],[130,320],[200,350],[290,370],[420,378],[480,320],[560,220],[630,105],[660,80],[710,120],[765,155],[800,130],[830,70],[860,70],[910,105],[935,95],[1050,150],[1100,205],[1170,238],[1210,245],[1250,222],[1265,232],[1300,205],[1320,220],[1350,218],[1365,238]].map(c11));
  el('lines').innerHTML = line(grayL, '#8a8a8a', 0.8) + line(greenL, '#109410', 0.9) + line(yelL, '#b09a18', 0.9) + line(redL, '#e61212', 1.3);

  /* drawing tools */
  var B = '#6a6ad6', K = '#555';
  function p(d, col, w) { return '<path d="' + d + '" fill="none" stroke="' + (col || B) + '" stroke-width="' + (w || 1) + '"/>'; }
  function f(d, col) { return '<path d="' + d + '" fill="' + col + '"/>'; }
  var icons = [
    p('M3 1v8l2-2 2 3 1-1-2-3h3z', K, .8), p('M2 10L10 2', K, .8) + p('M4 8L8 4'), p('M2 10L10 2', K, .8) + p('M5 7L9 3'), p('M2 10l7-7', K, .8) + f('M8 1h3v3z', B),
    p('M2 10L10 2', B), p('M1 6h10', K, .8) + f('M4 5h3v2H4z', K), p('M1 6h10', K, .8) + f('M1 5h4v2H1z', B), p('M1 6h10', K, .8) + f('M1 5h3v2H1zM8 5h3v2H8z', K),
    p('M6 1v10', B) + f('M5 4h2v2H5z', K), p('M2 2h8M2 5h8M2 8h8M2 10h8M5 1v10', B, .8), p('M1 7l5-5M4 9l6-6M6 11l5-5', '#7a7a9a', .9), p('M1 7l5-5M4 9l6-6M6 11l5-5', '#7a7a9a', .9),
    p('M2 8l6-6M4 10l6-6', '#7a7a9a', .9), p('M4 2c4 0 5 6 0 8', B), '<circle cx="6" cy="6" r="4.500" fill="none" stroke="#777"/>' + p('M6 6l2-2', K, .8), '<circle cx="6" cy="6" r="4.500" fill="none" stroke="#777"/>' + p('M2 4l7 5M4 2l6 5M2 8l4 2', B, .8),
    p('M1 3l2 7 3-6 2 6 3-7', B, 1.2), p('M1 10l3-5 2-3 2 3 3 5M4 10l2-6 2 6', B, .9), p('M1 10l3-3 2 1 4-5', B) + f('M9 2h2v2H9z', K), p('M1 2l3 3 2-1 4 6', B) + f('M9 9h2v2H9z', K),
    p('M1 10l3-5 2-2 2 3 3 4', '#555', .9), p('M1 10h10M1 2h9M2 5l8-1M2 8l8-1', B, .8), p('M1 10h10M3 4h6v4H3zM1 2h10', B, .8), p('M1 2h10M1 2v8h10M3 5h7', K, .8),
    p('M1 1v9h10M3 4h7M3 7h5', B, .8), p('M1 2h10M1 1v9h10M3 5h7M3 8h7', K, .8), p('M1 3l10-2M1 10l10-2M1 1v10M4 1v10M7 1v10M11 1v10', '#7a7a9a', .7), p('M1 9L11 1M1 11l10-6M2 1v10M5 1v10M8 1v10', '#7a7a9a', .7),
    p('M1 2v8M11 2v8M1 8L11 4', K, .9), p('M2 2v8M4 2v8M6 2v8M8 2v8M10 2v8', '#7a7a9a', .9), p('M2 2v8M3 2v8M6 2v8M7 2v8M10 2v8', B, 1), p('M2 2v8M6 2v8M10 2v8M2 3h3M7 3h3', B, 1),
    p('M1 2v8M3 2v8M5 2v8M7 2v8M9 2v8M11 2v8', '#777', 1), f('M1 2h2v8H1zM4 2h1v8H4zM6 2h4v8H6z', '#5555dd'), p('M1 2v8M3 2v8M6 2v8', '#777', 1) + p('M8 2v8M10.500 2v8', K, 1.200), p('M1 10L11 2M1 10L11 4M1 10L11 6M1 10h10', '#888', .8),
    p('M1 1v9h10M1 10L9 1M1 10l10-6M1 10l10-3', B, .9), p('M6 2v8M3 7l3 3 3-3', K, .9), p('M2 2l8 1-4 7z', K, 1), p('M1 3h10v7H1z', B, 1.100),
    f('M6 2l3 4H7v4H5V6H3z', '#e01818'), f('M6 10L3 6h2V2h2v4h2z', '#2a9a2a'), p('M2 10l7-7', K, .8) + f('M6 5l3 4-4 1zM1 9l2 2-2 1z', '#d03030'), '<text x="2" y="10" font-family="Liberation Sans" font-weight="bold" font-size="10" fill="#333">A</text>',
    '<text x="2" y="10" font-family="Liberation Sans" font-weight="bold" font-size="9" fill="#333">A</text>' + p('M1 2h4', K, 1.200), f('M2 2h8v8H2z', '#aaa') + f('M4 4h4v4H4z', '#ccc'), p('M2 2l8 8M10 2l-8 8', '#e03030', 1.400), p('M1 5h5v6H1z', '#bbb', .8) + '<circle cx="8.500" cy="3.500" r="2.300" fill="#e8e040"/>',
    p('M1.500 1.500h9v9h-9zM3 4h6M3 6h6M3 8h6', B, 1), p('M1 3h10v6H1z', B, 1.100) + p('M1 4.500h10', K, .8), p('M1 2h10v8H1z', K, .9) + f('M4 4h4v4H4z', '#3a9a6a'), '',
    f('M5.500 1h1v8h3v1.200h-8V9h4z', '#e03030'), f('M1.500 2h8v1.200h-3v8h-1v-8h-4z', '#3a9a3a'), '<circle cx="6" cy="3" r="1.600" fill="#e03030"/><circle cx="6" cy="6.500" r="1.600" fill="#e8a020"/><circle cx="6" cy="10" r="1.600" fill="#3a9a3a"/>', ''
  ];
  el('tools').innerHTML = icons.map(function (s) { return '<svg viewBox="0 0 12 12">' + s + '</svg>'; }).join('');
})();
```
